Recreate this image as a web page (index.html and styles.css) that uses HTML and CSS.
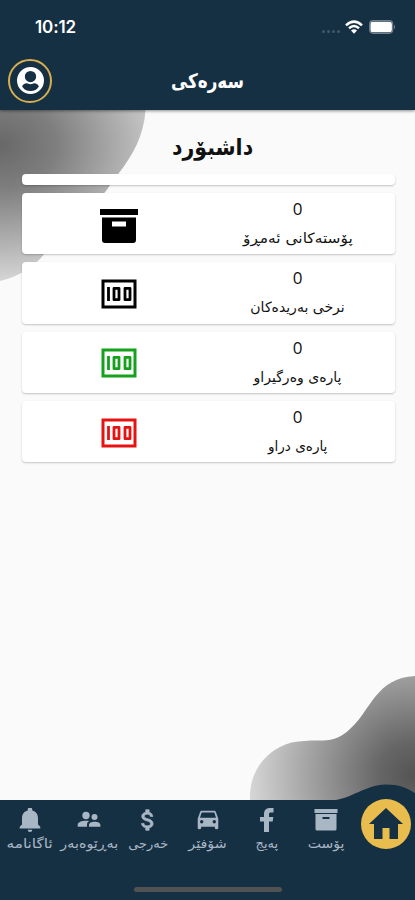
FILE: index.html
```html
<!DOCTYPE html>
<html lang="ckb" dir="rtl">
<head>
<meta charset="utf-8">
<title>سەرەکی</title>
<link rel="stylesheet" href="styles.css">
</head>
<body>
<svg class="defs" aria-hidden="true">
  <symbol id="box" viewBox="0 0 38 34"><path d="M0 0h38v6H0zM2 8.500h34V31a3 3 0 0 1-3 3H5a3 3 0 0 1-3-3zM12 12.500v5h14v-5z" fill-rule="evenodd"/></symbol>
  <symbol id="money" viewBox="0 0 36 30"><path d="M2 2h32v26H2z" fill="none" stroke="currentColor" stroke-width="3"/><path d="M7.500 8v14M13 9.300h5v11.400h-5zM24 9.300h5v11.400h-5z" fill="none" stroke="currentColor" stroke-width="2.800" stroke-linejoin="round"/></symbol>
</svg>
<div class="screen">
  <header class="header">
    <div class="status" dir="ltr">
      <span class="time">10:12</span>
      <span class="dots"><i></i><i></i><i></i><i></i></span>
      <svg class="wifi" viewBox="0 0 18 14"><path d="M1 5.300Q9-2 17 5.300M4 8.200q5-4.500 10 0" fill="none" stroke="currentColor" stroke-width="2.500"/><path d="M6 10.600q3-2.500 6 0L9 13.800z"/></svg>
      <svg class="battery" viewBox="0 0 27 14"><rect x=".7" y=".7" width="23" height="12.600" rx="3.500" fill="none" stroke="#71808c" stroke-width="1.200"/><rect x="1.500" y="1.700" width="21.400" height="10.600" rx="2.300"/><path d="M25 4.500q2 2.500 0 5z" fill="#71808c"/></svg>
    </div>
    <div class="bar">
      <div class="avatar"><svg viewBox="2 2 20 20"><path d="M12 2a10 10 0 1 0 0 20 10 10 0 0 0 0-20zm0 2.900a4.200 4.200 0 1 1 0 8.400 4.200 4.200 0 0 1 0-8.400zm0 14.900a7.300 7.300 0 0 1-6.200-3.400c.3-1.300 1.800-2.300 3.400-2.300 1 0 1.500.7 2.800.7s1.800-.7 2.800-.7c1.600 0 3.100 1 3.400 2.300a7.300 7.300 0 0 1-6.200 3.400z" fill-rule="evenodd"/></svg></div>
      <h1><span>سەرەکی</span></h1>
    </div>
  </header>
  <main class="main">
    <svg class="blob blob-top" viewBox="0 0 150 172"><defs><radialGradient id="g1" gradientUnits="userSpaceOnUse" cx="0" cy="0" r="1" gradientTransform="translate(0 35) scale(185 145)"><stop stop-color="#686868"/><stop offset=".3" stop-color="#7e7e7e"/><stop offset="1" stop-color="#dedede"/></radialGradient></defs><path fill="url(#g1)" d="M0 0H145.500C144 25 133 45 119 63C108 77 104 87 93 92C76 100 61 111 53 128C45 149 28 164 0 171z"/></svg>
    <svg class="blob blob-bottom" viewBox="0 0 165 130"><defs><radialGradient id="g2" gradientUnits="userSpaceOnUse" cx="162" cy="100" r="165"><stop stop-color="#555"/><stop offset=".2" stop-color="#666"/><stop offset="1" stop-color="#d8d8d8"/></radialGradient></defs><path fill="url(#g2)" d="M0 130V121C0 90 25 66 55 66C71 64 84 70 101 53C121 35 126 3 165 1V130z"/></svg>
    <h2><span>داشبۆرد</span></h2>
    <section class="cards">
      <div class="card stub"></div>
      <div class="card"><div class="label"><b>0</b><span class="w1">پۆستەکانی ئەمڕۆ</span></div><div class="pic"><svg class="ibox"><use href="#box"/></svg></div></div>
      <div class="card"><div class="label"><b>0</b><span class="w2">نرخی بەریدەکان</span></div><div class="pic"><svg class="imoney"><use href="#money"/></svg></div></div>
      <div class="card"><div class="label"><b>0</b><span class="w3">پارەی وەرگیراو</span></div><div class="pic green"><svg class="imoney"><use href="#money"/></svg></div></div>
      <div class="card"><div class="label"><b>0</b><span class="w4">پارەی دراو</span></div><div class="pic red"><svg class="imoney"><use href="#money"/></svg></div></div>
    </section>
  </main>
  <nav class="nav">
    <svg class="bump" viewBox="0 0 90 18"><path d="M0 18C24 16 35 2 57 1.500C72 1.500 80 6 90 13V18z"/></svg>
    <div class="tabs">
      <div class="tab home"><div class="disc"><svg viewBox="0 0 34 32"><path d="M17 0L34 16H29V31H20.500V20H13.500V31H5V16H0z"/></svg></div></div>
      <div class="tab"><svg viewBox="0 0 24 24"><path d="M.5 1h23v4H.5zM1.500 6h21v15a1.500 1.500 0 0 1-1.500 1.500H3A1.500 1.500 0 0 1 1.500 21zM8.500 9v2h7V9z" fill-rule="evenodd"/></svg><span class="n1">پۆست</span></div>
      <div class="tab"><svg viewBox="0 0 24 24"><path d="M9 24V13.500H5V9h4V6c0-4 2.500-6 6-6h3.500v4.500H16c-1.500 0-2 .6-2 2V9h4.300l-.6 4.500H14V24z"/></svg><span class="n2">پەیج</span></div>
      <div class="tab"><svg viewBox="1.500 1.500 21 21"><path d="M18.920 5.010A1.500 1.500 0 0 0 17.500 4h-11c-.66 0-1.210.420-1.420 1.010L3 11v8c0 .550.450 1 1 1h1c.550 0 1-.450 1-1v-1h12v1c0 .550.450 1 1 1h1c.550 0 1-.450 1-1v-8zM6.500 15a1.500 1.500 0 1 1 0-3 1.500 1.500 0 0 1 0 3zm11 0a1.500 1.500 0 1 1 0-3 1.500 1.500 0 0 1 0 3zM5 10l1.500-4.500h11L19 10z" fill-rule="evenodd"/></svg><span class="n3">شۆفێر</span></div>
      <div class="tab"><svg viewBox="1.500 1.500 21 21"><path d="M11.800 10.900c-2.270-.590-3-1.200-3-2.150 0-1.090 1.010-1.850 2.700-1.850 1.780 0 2.440.850 2.500 2.100h2.210c-.070-1.720-1.120-3.300-3.210-3.810V3h-3v2.160c-1.940.420-3.500 1.680-3.500 3.610 0 2.310 1.910 3.460 4.700 4.130 2.500.6 3 1.480 3 2.410 0 .690-.490 1.790-2.700 1.790-2.060 0-2.870-.920-2.980-2.100h-2.200c.120 2.190 1.760 3.420 3.680 3.830V21h3v-2.150c1.950-.370 3.500-1.500 3.500-3.550 0-2.840-2.430-3.810-4.700-4.400z" stroke="currentColor" stroke-width=".6"/></svg><span class="n4">خەرجی</span></div>
      <div class="tab"><svg viewBox="0 0 24 24"><circle cx="9" cy="7.500" r="3.700"/><circle cx="17.500" cy="9" r="3"/><path d="M.7 18.700v-2c0-2.500 4-4 8.300-4 1.200 0 2.300.1 3.200.4-1.500 1-2.200 2.100-2.200 3.600v2zM12 18.700v-1.600c0-2.100 2.500-3.300 5.700-3.300s5.700 1.200 5.700 3.300v1.600z"/></svg><span class="n5">بەڕێوەبەر</span></div>
      <div class="tab"><svg viewBox="1.500 1.500 21 21"><path d="M12 22.500a2 2 0 0 0 2-2h-4a2 2 0 0 0 2 2zM19 16v-5.500c0-3.400-1.800-6-5-6.800V3a2 2 0 0 0-4 0v.7c-3.200.8-5 3.400-5 6.800V16l-2 2v1.500h18V18z"/></svg><span class="n6">ئاگانامە</span></div>
    </div>
    <div class="indicator"></div>
  </nav>
</div>
</body>
</html>
```
FILE: styles.css
```css
* { box-sizing: border-box; }
body { margin: 0; font-family: "DejaVu Sans", sans-serif; }
svg { display: block; fill: currentColor; }
.defs { position: absolute; width: 0; height: 0; }
.screen { width: 415px; height: 900px; display: flex; flex-direction: column; background: #fafafa; overflow: hidden; }
.header { height: 110px; flex: none; background: #152f43; color: #fff; box-shadow: 0 1px 3px rgba(0,0,0,.45); position: relative; z-index: 2; }
.status { height: 52px; padding: 2px 19px 0 35px; display: flex; align-items: center; }
.time { font: 600 17px/20px Inter, sans-serif; letter-spacing: -.1px; margin-right: auto; }
.dots { display: flex; gap: 2px; margin: 9px 5px 0 0; }
.dots i { width: 3px; height: 3px; border-radius: 50%; background: #435868; }
.wifi { width: 18px; height: 14px; margin-right: 6px; }
.battery { width: 27px; height: 14px; }
.bar { display: grid; grid-template-columns: 1fr; height: 58px; align-items: center; }
.bar > * { grid-area: 1 / 1; }
.avatar { justify-self: end; margin: 0 0 1px 8px; width: 44px; height: 44px; border: 2px solid #d6ae50; border-radius: 50%; display: grid; place-items: center; }
.avatar svg { width: 27px; height: 27px; }
h1, h2 { margin: 0; text-align: center; white-space: nowrap; }
h1 { font-size: 20px; line-height: 28px; }
h1 span, h2 span, .label span, .label b, .tab span { display: inline-block; }
h1 span { transform: scaleX(.84); }
h2 span { transform: scaleX(.89); }
.main { flex: 1; position: relative; padding: 0 20px 0 22px; color: #111; }
.blob { position: absolute; }
.blob-top { left: 0; top: 0; width: 150px; height: 172px; }
.blob-bottom { left: 250px; top: 565px; width: 165px; height: 130px; }
h2 { position: relative; font-size: 23px; line-height: 36px; height: 64px; padding: 19px 0 0; margin: 0 4px 0 -4px; direction: rtl; left: 8px; }
.cards { position: relative; display: flex; flex-direction: column; gap: 8px; }
.card { height: 61.300px; border-radius: 4px; background: #fff; box-shadow: 0 1px 2px rgba(0,0,0,.22); display: grid; grid-template-columns: 195px 178px; text-align: center; }
.card.stub { height: 11px; }
.label { display: flex; flex-direction: column; align-items: center; white-space: nowrap; }
.label b { font: 400 17px/20px "Open Sans", sans-serif; margin-top: 6px; }
.label span { font-size: 14px; line-height: 20px; margin-top: 9px; }
.label .w1 { transform: scaleX(1.1); }
.label .w4 { transform: scaleX(.97); }
.pic { display: grid; place-items: center; padding: 2px 0 0 16px; direction: ltr; color: #000; }
.ibox { width: 38px; height: 34px; margin-top: 2px; }
.imoney { width: 36px; height: 30px; }
.green { color: #15a01d; }
.red { color: #e71212; }
.nav { flex: none; height: 100px; background: #152f43; position: relative; color: #a9b7c5; }
.bump { position: absolute; left: 329px; top: -17px; width: 90px; height: 18px; color: #152f43; }
.tabs { position: relative; display: grid; grid-template-columns: repeat(7, 1fr); height: 87px; }
.tab { display: flex; flex-direction: column; align-items: center; white-space: nowrap; padding-top: 8px; min-width: 0; }
.tab svg { width: 24px; height: 24px; flex: none; }
.tab span { font-size: 13px; line-height: 20px; margin-top: 2px; }
.tab .n1 { transform: scaleX(1.08); }
.tab .n3 { transform: scaleX(1.1); }
.tab .n5 { transform: scaleX(1.1); }
.tab .n6 { transform: scaleX(1.18); }
.tab.home { padding-top: 0; }
.disc { width: 50px; height: 50px; border-radius: 50%; background: #e8bd4e; display: grid; place-items: center; margin: -1px -1px 0 0; color: #152f43; }
.home .disc svg { width: 34px; height: 32px; }
.indicator { width: 148px; height: 5px; border-radius: 3px; background: #515254; margin: 0 133px 0 auto; }
```
